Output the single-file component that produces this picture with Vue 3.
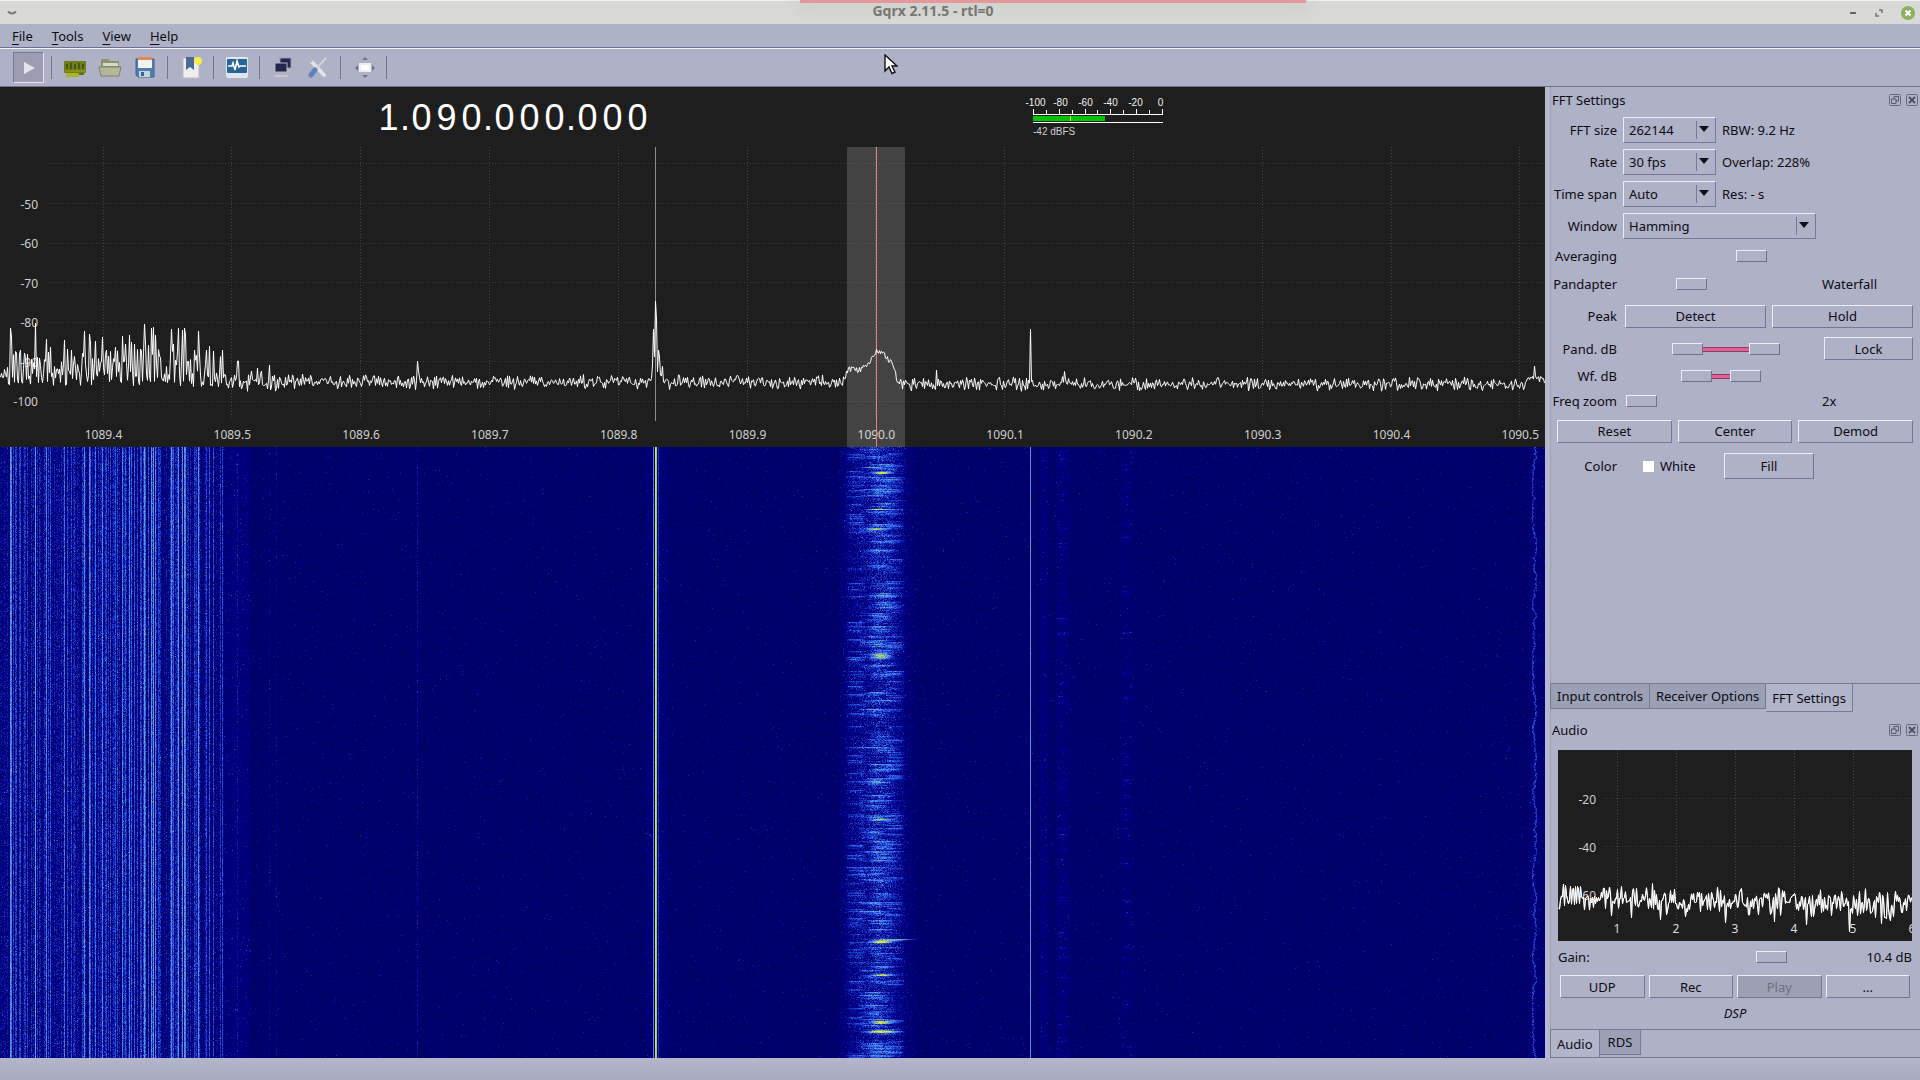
<script setup>
import { onMounted, onBeforeUnmount, ref } from 'vue'

const menus = ['File', 'Tools', 'View', 'Help']
const digits = '1.090.000.000'.split('')
const meterLabels = ['-100', '-80', '-60', '-40', '-20', '0']

const SPAN = 1545
const freqLabels = Array.from({ length: 12 }, (_, i) => ({
  text: (1089.4 + i / 10).toFixed(1),
  x: 103.5 + i * 128.8,
}))
const dbLabels = [-50, -60, -70, -80, -90, -100].map((v, i) => ({ text: v, y: 57 + i * 39.4 }))
const audioDb = [-20, -40, -60].map((v, i) => ({ text: v, y: 49 + i * 48 }))
const audioHz = [1, 2, 3, 4, 5, 6].map((v) => ({ text: v, x: 59 * v }))

const combos = [
  { id: 'fft', label: 'FFT size', value: '262144', side: 'RBW: 9.2 Hz' },
  { id: 'rate', label: 'Rate', value: '30 fps', side: 'Overlap: 228%' },
  { id: 'span', label: 'Time span', value: 'Auto', side: 'Res: - s' },
  { id: 'window', label: 'Window', value: 'Hamming', side: '', wide: true },
]
const ranges = [
  { id: 'pand', label: 'Pand. dB', low: 46, high: 123, lock: true },
  { id: 'wf', label: 'Wf. dB', low: 55, high: 104, lock: false },
]

const plotEl = ref(null)
const fallEl = ref(null)
const audioEl = ref(null)

function generator(seed) {
  let a = seed
  return () => {
    a = (a + 0x6d2b79f5) | 0
    let t = Math.imul(a ^ (a >>> 15), 1 | a)
    t = (t + Math.imul(t ^ (t >>> 7), 61 | t)) ^ t
    return ((t ^ (t >>> 14)) >>> 0) / 4294967296
  }
}

const peaks = {
  10: 181, 11: 190, 20: 203, 24: 206, 35: 176, 46: 192, 48: 205, 50: 200, 64: 193, 67: 202, 71: 203,
  84: 184, 89: 187, 90: 196, 95: 194, 102: 190, 106: 203, 115: 200, 122: 189, 125: 197, 129: 188,
  131: 195, 134: 197, 140: 202, 144: 177, 145: 196, 148: 198, 151: 181, 153: 180, 155: 188, 171: 182,
  173: 197, 178: 181, 182: 183, 184: 181, 185: 188, 194: 203, 198: 184, 209: 199, 213: 204, 222: 203,
  237: 214, 238: 214, 251: 224, 257: 221, 261: 224, 269: 218, 302: 227, 417: 214, 418: 224,
}
const shape = [
  [650, 234], [652, 218], [653, 182], [654, 210], [655, 154], [656, 172], [657, 225], [658, 203],
  [659, 210], [660, 228], [662, 219], [664, 236],
]
const hill = [
  [842, 235], [848, 221], [854, 223], [862, 221], [866, 218], [872, 209], [876, 204], [882, 204],
  [886, 212], [892, 216], [895, 227], [898, 236],
]

function buildTrace() {
  const rnd = generator(42)
  const ys = []
  for (let x = 0; x < SPAN; x++) {
    const base = x < 900 ? 235 : 237
    let y = base + (rnd() + rnd() - 1) * 8
    if (x < 8) y = 220 + rnd() * 12
    else if (x < 223) {
      y = rnd() < 0.46 ? 226 + rnd() * 14 : 202 + rnd() * 28
    } else if (x < 280) y = base + (rnd() + rnd() - 1) * 10
    if (x > 1525) y = 228 + rnd() * 8
    if (x === 1534) y = 219
    if (x === 936) y = 223
    if (x === 1030) y = 182
    if (x > 1059 && x < 1066) y -= 5
    if (peaks[x]) y = peaks[x]
    ys.push(y)
  }
  shape.forEach(([x, y]) => { ys[x] = y })
  for (let i = 0; i < hill.length - 1; i++) {
    const [x0, y0] = hill[i]
    const [x1, y1] = hill[i + 1]
    for (let x = x0; x < x1; x++) ys[x] = y0 + ((y1 - y0) * (x - x0)) / (x1 - x0) + (rnd() - 0.5) * 7
  }
  return ys
}
const trace = buildTrace()

function fit(el) {
  el.width = el.clientWidth
  el.height = el.clientHeight
  return el.getContext('2d')
}

function dotted(c, x0, y0, x1, y1, color, dash) {
  c.strokeStyle = color
  c.setLineDash(dash)
  c.beginPath()
  c.moveTo(x0, y0)
  c.lineTo(x1, y1)
  c.stroke()
  c.setLineDash([])
}

function drawPlot() {
  const c = fit(plotEl.value)
  const w = c.canvas.width
  const k = w / SPAN
  c.lineWidth = 1
  freqLabels.forEach((f) => {
    const x = Math.round(f.x * k) - 0.5
    dotted(c, x, 0, x, 272, '#464646', [1, 2])
  })
  for (let i = -1; i < 6; i++) {
    const y = Math.round(57 + i * 39.6) - 0.5
    dotted(c, 48, y, w, y, '#3c3c3c', [1, 2])
  }
  c.fillStyle = 'rgba(255,255,255,0.17)'
  c.fillRect(847 * k, 0, 58 * k, 300)
  c.fillStyle = '#8c8c8c'
  c.fillRect(Math.round(655 * k), 0, 1, 274)
  c.fillStyle = '#e8807a'
  c.fillRect(Math.round(876 * k), 0, 1, 300)
  c.strokeStyle = '#ffffff'
  c.beginPath()
  trace.forEach((y, x) => c.lineTo(x * k + 0.5, y))
  c.stroke()
}

// Spectrum intensity (0-255) to colour: black, blue, light blue, yellow, red.
function tint(i) {
  if (i < 20) return [0, 0, 0]
  if (i < 70) return [0, 0, (140 * (i - 20)) / 50]
  if (i < 100) return [(60 * (i - 70)) / 30, (125 * (i - 70)) / 30, (115 * (i - 70)) / 30 + 140]
  if (i < 150) return [(195 * (i - 100)) / 50 + 60, (130 * (i - 100)) / 50 + 125, 255 - (255 * (i - 100)) / 50]
  return [255, 255 - (255 * (Math.min(i, 250) - 150)) / 100, 0]
}

// Strong bursts: row, centre, half width, added intensity.
const hot = [
  [20, 873, 10, 40], [25, 882, 8, 50], [26, 882, 8, 54], [62, 878, 10, 58],
  [81, 878, 11, 30], [82, 878, 10, 22], [148, 878, 12, 18],
  [206, 881, 8, 20], [207, 881, 8, 24], [208, 882, 8, 30], [209, 882, 8, 36], [210, 882, 8, 38], [211, 882, 8, 26],
  [335, 881, 8, 26], [372, 880, 10, 40], [373, 880, 10, 26],
  [492, 896, 18, 46], [493, 890, 14, 38], [494, 881, 10, 48], [495, 881, 8, 52],
  [527, 882, 9, 40], [528, 882, 9, 36],
  [574, 881, 9, 48], [575, 881, 9, 56], [576, 881, 9, 50],
  [583, 881, 12, 30], [584, 881, 14, 46], [585, 884, 13, 46],
]

function drawFall() {
  const c = fit(fallEl.value)
  const w = c.canvas.width
  const h = c.canvas.height
  const k = w / SPAN
  const img = c.createImageData(w, h)
  const rnd = generator(7)
  let edge = 1534
  let level = [0.4, 0.5, 0.4, 0.2, 0.2]
  let centre = 879
  for (let y = 0; y < h; y++) {
    level = level.map((v, n) => {
      const p = rnd()
      const r = rnd()
      if (n > 2) return r < 0.07 ? 0.4 + p * 0.5 : v * 0.6
      if (n === 1) return r < 0.2 ? 0.5 + p * 0.4 : v * 0.55 + p * 0.2
      return r < 0.14 ? 0.45 + p * 0.5 : v * 0.5 + p * 0.12
    })
    centre += (879 - centre) * 0.3 + (rnd() - 0.5) * 8
    const wide = 10 + rnd() * 6
    edge = Math.max(1532, Math.min(1536, edge + (rnd() - 0.5) * 2))
    const burst = hot.filter((b) => b[0] === y)
    for (let px = 0; px < w; px++) {
      const x = Math.floor(px / k)
      let i = 58 + (rnd() - 0.5) * 9
      const s = rnd()
      if (s < 0.012) i += 8 + s * 1000
      if (x < 224) {
        const a = Math.max(0, (235 - trace[x]) / 58)
        i += 4 + a * 42 + (rnd() - 0.5) * 20
        if (a > 0.7) i += 5
      } else if (x < 250) i += rnd() * 11
      if (x === 237 || x === 269 || x === 276) i += rnd() * 16
      if (x === 417) i += rnd() * 22
      if (x > 645 && x < 668) i += rnd() * 8
      if (x === 653) i = 98 + rnd() * 8
      if (x === 654) i = 62
      if (x === 655) i = 134 + rnd() * 10
      if (x === 656) i = 128
      if (x === 658) i = 76 + rnd() * 12
      if (x > 836 && x < 918) {
        const far = Math.abs(x - 877) / 41
        i += rnd() * 16 * (1 - far * far)
        if (rnd() < 0.05) i += 10
      }
      const left = (x - 855) / 9
      i += x < 866 && x > 838 ? level[0] * 28 * Math.exp(-(left ** 4)) + (rnd() - 0.4) * 10 : 0
      if (x > 858 && x < 912) {
        const d = (x - centre) / wide
        const env = Math.exp(-d * d)
        i += level[1] * 46 * env + (rnd() - 0.5) * 20 * env
      }
      const right = (x - 895) / 9
      if (x > 884 && x < 912) i += level[2] * 26 * Math.exp(-(right ** 4))
      if (x > 1055 && x < 1070) i += level[3] * 26 * rnd() * Math.exp(-(((x - 1062) / 6) ** 2)) + rnd() * 7
      if (x > 1119 && x < 1134) i += level[4] * 26 * rnd() * Math.exp(-(((x - 1126) / 6) ** 2)) + rnd() * 4
      if (x > 1039 && x < 1048) i += rnd() * 9
      if (x === 1030) i = 108
      if (x > 1528) i += rnd() * 7
      if (Math.abs(x - edge) < 0.9) i = 74 + rnd() * 16
      for (const [, hx, hw, amp] of burst) i += amp * Math.exp(-(((x - hx) / hw) ** 2))
      const o = (y * w + px) * 4
      const [r, g, b] = tint(Math.min(i, 144))
      img.data[o] = r
      img.data[o + 1] = g
      img.data[o + 2] = b
      img.data[o + 3] = 255
    }
  }
  c.putImageData(img, 0, 0)
}

function drawAudio() {
  const c = fit(audioEl.value)
  const w = c.canvas.width
  const h = c.canvas.height
  const rnd = generator(19)
  audioHz.forEach((a) => dotted(c, a.x + 0.5, 0, a.x + 0.5, h - 20, '#484848', [1, 2]))
  audioDb.forEach((a) => dotted(c, 46, a.y - 0.5, w, a.y - 0.5, '#3c3c3c', [1, 2]))
  c.strokeStyle = '#ffffff'
  c.beginPath()
  for (let x = 0; x < w; x++) {
    let y = 147 + x * 0.02 + (rnd() + rnd() - 1) * 16
    if (rnd() < 0.05) y += 10
    if (x === 0) y = 158
    if (x === 167) y = 173
    if (x === 248) y = 175
    if (x === 291) y = 182
    if (x === 323) y = 174
    c.lineTo(x + 0.5, y)
  }
  c.stroke()
  c.stroke()
}

function drawAll() {
  drawPlot()
  drawFall()
  drawAudio()
}
onMounted(() => {
  drawAll()
  window.addEventListener('resize', drawAll)
})
onBeforeUnmount(() => window.removeEventListener('resize', drawAll))
</script>

<template>
  <div class="app">
    <header class="titlebar">
      <div class="strip"></div>
      <svg class="chev" width="10" height="6" viewBox="0 0 10 6"><path d="M1 1.5 Q5 5.5 9 1.5" fill="none" stroke="#777" stroke-width="2" /></svg>
      <h1>Gqrx 2.11.5 - rtl=0</h1>
      <div class="wm">
        <button aria-label="Minimize"><svg width="8" height="12" viewBox="0 0 8 12"><rect x="1" y="5" width="6" height="2" fill="#666" /></svg></button>
        <button aria-label="Restore"><svg width="10" height="10" viewBox="0 0 10 10"><path d="M5 2h3v3M2 5v3h3" fill="none" stroke="#777" stroke-width="1.6" /></svg></button>
        <button aria-label="Close"><svg width="14" height="14" viewBox="0 0 14 14"><circle cx="7" cy="7" r="7" fill="#8fae64" /><path d="M4.5 4.5l5 5M9.5 4.5l-5 5" stroke="#fff" stroke-width="2" /></svg></button>
      </div>
    </header>

    <nav class="menubar">
      <button v-for="m in menus" :key="m"><u>{{ m[0] }}</u>{{ m.slice(1) }}</button>
    </nav>

    <div class="toolbar">
      <button class="play" aria-label="Start"><svg width="12" height="12" viewBox="0 0 12 12"><path d="M1 0L12 6L1 12z" fill="#e6e6ea" /></svg></button>
      <i class="sep"></i>
      <button class="tool" aria-label="Configure I/O devices">
        <svg width="24" height="24" viewBox="0 0 24 24"><rect x="1" y="5" width="22" height="12" rx="1" fill="#6f7f14" /><rect x="3" y="17" width="13" height="4" fill="#a9b424" /><path d="M4 8v5M8 7v6M12 8v5M16 7v6M20 8v5" stroke="#46551a" stroke-width="2" /><path d="M2 15h20" stroke="#98a428" /><path d="M16 18h5" stroke="#5c6a1a" stroke-width="2" /></svg>
      </button>
      <button class="tool" aria-label="Open">
        <svg width="24" height="24" viewBox="0 0 24 24"><path d="M3 20V3h7l2 2h9v15z" fill="#8d9273" /><path d="M5 7h15v3H5z" fill="#d8dbc4" /><path d="M1 11h22l-2 9H3z" fill="#b3b89a" stroke="#7c8166" /></svg>
      </button>
      <button class="tool" aria-label="Save">
        <svg width="24" height="24" viewBox="0 0 24 24"><path d="M3 3h18v18H5l-2-2z" fill="#4f7fae" stroke="#3b648f" /><rect x="5" y="2" width="14" height="10" fill="#f6f4f2" /><rect x="5" y="1" width="14" height="3" fill="#e28a55" /><rect x="6" y="15" width="11" height="6" fill="#c6d3da" /><rect x="8" y="16" width="3" height="4" fill="#3b648f" /></svg>
      </button>
      <i class="sep"></i>
      <button class="tool" aria-label="Bookmarks">
        <svg width="24" height="24" viewBox="0 0 24 24"><path d="M4 2h16v20H4z" fill="#eeeef0" stroke="#b9b9c2" /><path d="M7 1h8v13l-4-3-4 3z" fill="#4b6a9c" /><circle cx="19" cy="5" r="4" fill="#f4ee4c" /></svg>
      </button>
      <i class="sep"></i>
      <button class="tool" aria-label="DSP">
        <svg width="24" height="24" viewBox="0 0 24 24"><rect x="1" y="1" width="22" height="21" rx="2" fill="#dfe7ee" /><rect x="2" y="3" width="20" height="14" rx="1" fill="#2a6398" /><path d="M3 10h4l1-3 2 7 2-9 2 6 1-1h6" fill="none" stroke="#fff" stroke-width="1.6" /></svg>
      </button>
      <i class="sep"></i>
      <button class="tool" aria-label="Remote control">
        <svg width="24" height="24" viewBox="0 0 24 24"><rect x="9" y="2" width="11" height="10" fill="#25254e" stroke="#9c9cb0" /><path d="M10 14h11v3H10z" fill="#b7b7b9" /><rect x="4" y="7" width="12" height="9" fill="#25254e" stroke="#b4b4c8" /><path d="M3 19h14v2H3z" fill="#c8c8c8" /></svg>
      </button>
      <button class="tool" aria-label="Remote settings">
        <svg width="24" height="24" viewBox="0 0 24 24"><path d="M5 5l13 14" stroke="#e4e4e4" stroke-width="4" stroke-linecap="round" /><path d="M2 2l4 4" stroke="#afb1c6" stroke-width="3" /><path d="M20 2L10 13" stroke="#d0d2d4" stroke-width="2" /><path d="M9 14L5 19" stroke="#6180bc" stroke-width="5" stroke-linecap="round" /></svg>
      </button>
      <i class="sep"></i>
      <button class="tool" aria-label="Full screen">
        <svg width="24" height="24" viewBox="0 0 24 24"><rect x="8" y="8" width="10" height="7" fill="#fff" stroke="#eceef6" stroke-width="2" /><path d="M13 1l3 3h-6zM13 22l3-3h-6zM3 12l3-3v6zM23 12l-3-3v6z" fill="#70748a" /></svg>
      </button>
      <i class="sep"></i>
      <svg class="pointer" width="14" height="21" viewBox="0 0 14 21"><path d="M1 1v16l4-4 3 6.500 3-1.400-3-6.100h5z" fill="#fff" stroke="#111" stroke-width="1.400" /></svg>
    </div>

    <main class="content">
      <section class="receiver">
        <div class="tuner">
          <div class="freq"><span v-for="(d, i) in digits" :key="i" :class="{ dot: d === '.' }">{{ d }}</span></div>
          <div class="meter">
            <div class="nums"><span v-for="l in meterLabels" :key="l">{{ l }}</span></div>
            <div class="scale">
              <div class="ticks"><i v-for="n in 11" :key="n"></i></div>
              <div class="level"><b></b></div>
              <p>-42 dBFS</p>
            </div>
          </div>
        </div>
        <div class="plot">
          <span v-for="l in dbLabels" :key="l.text" class="db" :style="{ top: l.y + 'px' }">{{ l.text }}</span>
          <span v-for="l in freqLabels" :key="l.text" class="mhz" :style="{ left: (l.x / SPAN) * 100 + '%' }">{{ l.text }}</span>
          <canvas ref="plotEl"></canvas>
        </div>
        <div class="fall"><canvas ref="fallEl"></canvas></div>
      </section>

      <aside class="side">
        <section class="dock fft">
          <div class="dockhead">
            <h2>FFT Settings</h2>
            <button aria-label="Float"><svg width="12" height="12" viewBox="0 0 12 12"><rect x=".5" y=".5" width="11" height="11" rx="1" fill="none" stroke="#666a7c" /><path d="M5 5V2.500h4.500V7H7M2.500 5H7v4.500H2.500z" fill="none" stroke="#555969" /></svg></button>
            <button aria-label="Close dock"><svg width="12" height="12" viewBox="0 0 12 12"><rect x=".5" y=".5" width="11" height="11" rx="1" fill="none" stroke="#666a7c" /><path d="M3 3l6 6M9 3l-6 6" stroke="#4c5060" stroke-width="1.800" /></svg></button>
          </div>
          <div v-for="c in combos" :key="c.id" class="row r32">
            <label :for="c.id">{{ c.label }}</label>
            <div class="combo" :class="{ wide: c.wide }">
              <select :id="c.id"><option>{{ c.value }}</option></select>
              <svg width="10" height="6" viewBox="0 0 10 6"><path d="M0 0h10L5 6z" fill="#10101c" /></svg>
            </div>
            <span>{{ c.side }}</span>
          </div>
          <div class="row r27"><label for="avg">Averaging</label><input id="avg" class="slider full" type="range" max="256" value="110" /></div>
          <div class="row r29"><label for="split">Pandapter</label><input id="split" class="slider" type="range" max="161" value="50" /><span class="after">Waterfall</span></div>
          <div class="row r36"><label>Peak</label><div class="pair"><button class="btn">Detect</button><button class="btn">Hold</button></div></div>
          <div v-for="r in ranges" :key="r.id" class="row" :class="r.lock ? 'r29' : 'r25'">
            <label :for="r.id">{{ r.label }}</label>
            <div class="dual">
              <i :style="{ left: r.low + 31 + 'px', width: r.high - r.low - 31 + 'px' }"></i>
              <input :id="r.id" class="slider" type="range" max="161" :value="r.low" />
              <input class="slider" type="range" max="161" :value="r.high" :aria-label="r.label + ' upper'" />
            </div>
            <button v-if="r.lock" class="btn lock">Lock</button>
          </div>
          <div class="row r25"><label for="zoom">Freq zoom</label><input id="zoom" class="slider" type="range" max="161" value="0" /><span class="after">2x</span></div>
          <div class="row r36 triple"><button class="btn">Reset</button><button class="btn">Center</button><button class="btn">Demod</button></div>
          <div class="row r32 color"><label>Color</label><input id="white" type="checkbox" /><label class="plain" for="white">White</label><button class="btn fill">Fill</button></div>
        </section>

        <div class="tabs">
          <button>Input controls</button><button>Receiver Options</button><button class="on">FFT Settings</button>
        </div>

        <section class="dock">
          <div class="dockhead">
            <h2>Audio</h2>
            <button aria-label="Float audio"><svg width="12" height="12" viewBox="0 0 12 12"><rect x=".5" y=".5" width="11" height="11" rx="1" fill="none" stroke="#666a7c" /><path d="M5 5V2.500h4.500V7H7M2.500 5H7v4.500H2.500z" fill="none" stroke="#555969" /></svg></button>
            <button aria-label="Close audio"><svg width="12" height="12" viewBox="0 0 12 12"><rect x=".5" y=".5" width="11" height="11" rx="1" fill="none" stroke="#666a7c" /><path d="M3 3l6 6M9 3l-6 6" stroke="#4c5060" stroke-width="1.800" /></svg></button>
          </div>
          <div class="audio">
            <span v-for="l in audioDb" :key="l.text" class="db" :style="{ top: l.y + 'px' }">{{ l.text }}</span>
            <span v-for="l in audioHz" :key="l.text" class="khz" :style="{ left: l.x + 'px' }">{{ l.text }}</span>
            <canvas ref="audioEl"></canvas>
          </div>
          <div class="gain"><label for="gain">Gain:</label><input id="gain" class="slider" type="range" max="219" value="157" /><output>10.4 dB</output></div>
          <div class="acts"><button class="btn">UDP</button><button class="btn">Rec</button><button class="btn" disabled>Play</button><button class="btn">...</button></div>
          <p class="dsp">DSP</p>
        </section>
        <div class="tabs low"><button class="on">Audio</button><button>RDS</button></div>
      </aside>
    </main>
    <footer class="status"></footer>
  </div>
</template>

<style>
body { background: #afb1c6; }
</style>

<style scoped>
.app { display: flex; flex-direction: column; min-height: 100vh; background: #afb1c6; color: #0c0c14; font: 13px/16px "Noto Sans", "Open Sans", sans-serif; }
button, select, input { font: inherit; color: inherit; margin: 0; padding: 0; border: 0; border-radius: 0; background: none; box-sizing: border-box; }
h1, h2, p { margin: 0; font-size: 13px; font-weight: 400; }
canvas { position: absolute; inset: 0; width: 100%; height: 100%; display: block; }

.titlebar { position: relative; display: flex; align-items: center; height: 24px; box-sizing: border-box; border-top: 1px solid #f2f2f2; background: #d9d9d7; padding: 0 5px 0 7px; }
.titlebar h1 { position: absolute; left: 0; right: 54px; top: 2px; text-align: center; font-size: 14px; font-weight: 700; color: #767673; }
.strip { position: absolute; left: 800px; width: 506px; top: -1px; height: 3px; background: #e6979c; box-shadow: 0 4px 16px 4px #cbcfc9; clip-path: inset(0 -30px -21px -30px); }
.wm { margin-left: auto; display: flex; gap: 17px; align-items: center; position: relative; }
.wm button { display: flex; }
.menubar { display: flex; height: 24px; box-sizing: border-box; padding-left: 12px; gap: 19px; align-items: center; background: #adb3c5; border-bottom: 1px solid #6f6c96; }
.menubar button { line-height: 20px; }
.menubar u { text-underline-offset: 3px; }
.toolbar { position: relative; display: flex; align-items: center; height: 39px; box-sizing: border-box; border-top: 1px solid #f4f4fc; border-bottom: 1px solid #71728c; padding: 0 13px; }
.play { width: 31px; height: 31px; background: #9c9cb2; border: 1px solid; border-color: #77799a #e4e4f2 #e4e4f2 #77799a; display: flex; align-items: center; justify-content: center; }
.tool { width: 24px; height: 24px; margin-right: 11px; display: flex; }
.sep { width: 1px; height: 23px; background: #73758f; margin-right: 11px; }
.play + .sep { margin-left: 7px; }
.tool:has(+ .sep) { margin-right: 10px; }
.pointer { position: absolute; left: 884px; top: 5px; }

.content { flex: 1; display: flex; }
.receiver { flex: 1; min-width: 0; display: flex; flex-direction: column; background: #1e1e1e; }
.tuner { height: 60px; display: flex; }
.freq { display: flex; margin-left: 376px; font: 36px/62px "Liberation Sans", Arial, sans-serif; color: #fff; height: 60px; }
.freq span { width: 25px; text-align: center; }
.freq .dot { width: 8px; display: flex; justify-content: center; }
.meter { margin-left: 370px; width: 156px; padding-top: 10px; font: 10px/12px "Liberation Sans", Arial, sans-serif; color: #f0f0f0; }
.nums { display: flex; padding: 0 3px; }
.nums span { width: 25px; text-align: center; }
.scale { padding: 0 13px; }
.ticks { display: flex; justify-content: space-between; align-items: flex-end; height: 5px; border-bottom: 1px solid #fff; }
.ticks i { width: 1px; height: 4px; background: #fff; }
.ticks i:nth-child(odd) { height: 5px; }
.level { height: 8px; box-sizing: border-box; border-bottom: 1px solid #fff; padding-top: 1px; }
.level b { display: block; width: 55%; height: 5px; background: linear-gradient(90deg, #00c400 51%, #e0f000 51%, #e0f000 53%, #00c400 53%); }
.scale p { font-size: 10px; color: #d0d0d0; padding-top: 3px; }
.plot { position: relative; height: 300px; overflow: hidden; color: #cfcfcf; font-size: 12px; }
.db { position: absolute; left: 0; width: 38px; text-align: right; margin-top: -7px; line-height: 16px; color: #cfcfcf; }
.mhz { position: absolute; bottom: 4px; width: 60px; margin-left: -30px; text-align: center; }
.fall { position: relative; flex: 1; min-height: 200px; background: #00006c; overflow: hidden; }

.side { width: 370px; border-left: 5px solid #b6b8cc; display: flex; flex-direction: column; box-shadow: inset 1px 0 #9c9fb8; }
.dockhead { display: flex; align-items: center; height: 26px; padding: 0 2px; gap: 5px; }
.dockhead h2 { flex: 1; }
.dockhead button { display: flex; }
.fft { flex: 1; padding-bottom: 1px; }
.row { display: flex; align-items: center; padding-right: 7px; }
.row > label { width: 67px; text-align: right; margin-right: 6px; }
.r25 { height: 25px; }
.r27 { height: 27px; }
.r29 { height: 29px; }
.r32 { height: 32px; }
.r36 { height: 36px; }
.fft .dockhead + .row { padding-top: 1px; }
.combo { position: relative; width: 93px; height: 26px; margin-right: 6px; }
.combo.wide { width: 193px; }
.combo select { appearance: none; width: 100%; height: 26px; padding-left: 5px; border: 1px solid; border-color: #eeeef8 #75789a #75789a #eeeef8; }
.combo svg { position: absolute; right: 7px; top: 9px; }
.combo::after { content: ""; position: absolute; right: 19px; top: 4px; bottom: 4px; width: 1px; background: #73769a; }
.slider { appearance: none; width: 192px; height: 12px; margin-left: 3px; }
.slider::-webkit-slider-runnable-track { height: 12px; background: none; }
.slider::-webkit-slider-thumb { appearance: none; width: 31px; height: 12px; box-sizing: border-box; background: #afb1c6; border: 1px solid; border-color: #eeeef8 #6d7090 #6d7090 #eeeef8; pointer-events: auto; }
.slider.full { width: 287px; }
.after { margin-left: 4px; }
.dual { display: grid; position: relative; margin-left: 3px; }
.dual .slider { grid-area: 1 / 1; margin-left: 0; pointer-events: none; }
.dual i { position: absolute; top: 4px; height: 3px; background: #e0609a; border-top: 1px solid #8e3c60; border-bottom: 1px solid #8e3c60; }
.btn { height: 23px; border: 1px solid; border-color: #eeeef8 #73769a #73769a #eeeef8; text-align: center; line-height: 20px; }
.btn:disabled { background: #9ca0b2; color: #6c7082; }
.pair { flex: 1; display: flex; gap: 6px; margin-left: 2px; }
.pair .btn, .triple .btn, .acts .btn { flex: 1; }
.lock { width: 89px; margin-left: auto; }
.triple { padding-left: 7px; gap: 6px; }
.color { padding-top: 1px; }
.color input { appearance: none; width: 11px; height: 11px; background: #fff; margin-left: 20px; }
.color .plain { width: auto; margin: 0 0 0 6px; }
.fill { width: 90px; height: 26px; margin-left: auto; margin-right: 99px; }

.tabs { display: flex; align-items: flex-start; height: 33px; border-top: 1px solid #777a96; }
.tabs button { height: 25px; padding: 0 6px; background: #9ca0b4; border: 1px solid #777a96; border-top: 0; }
.tabs button + button { border-left: 0; }
.tabs .on { height: 28px; background: #b2b4ca; }
.audio { position: relative; height: 191px; margin: 7px 8px 0 8px; background: #1e1e1e; overflow: hidden; font-size: 12px; color: #dcdcdc; }
.khz { position: absolute; bottom: 4px; width: 20px; margin-left: -10px; text-align: center; }
.gain { display: flex; align-items: center; height: 31px; padding: 0 8px; }
.gain .slider { width: 250px; margin: 0 auto 0 9px; }
.acts { display: flex; gap: 4px; padding: 3px 10px 0 10px; }
.dsp { font-style: italic; text-align: center; padding: 7px 0 8px; }
.tabs.low { height: 27px; border-bottom: 1px solid #777a96; }
.tabs.low button + button { padding: 0 8px; }
.status { height: 22px; background: linear-gradient(#b4b6cb, #a6a8be); }
</style>
